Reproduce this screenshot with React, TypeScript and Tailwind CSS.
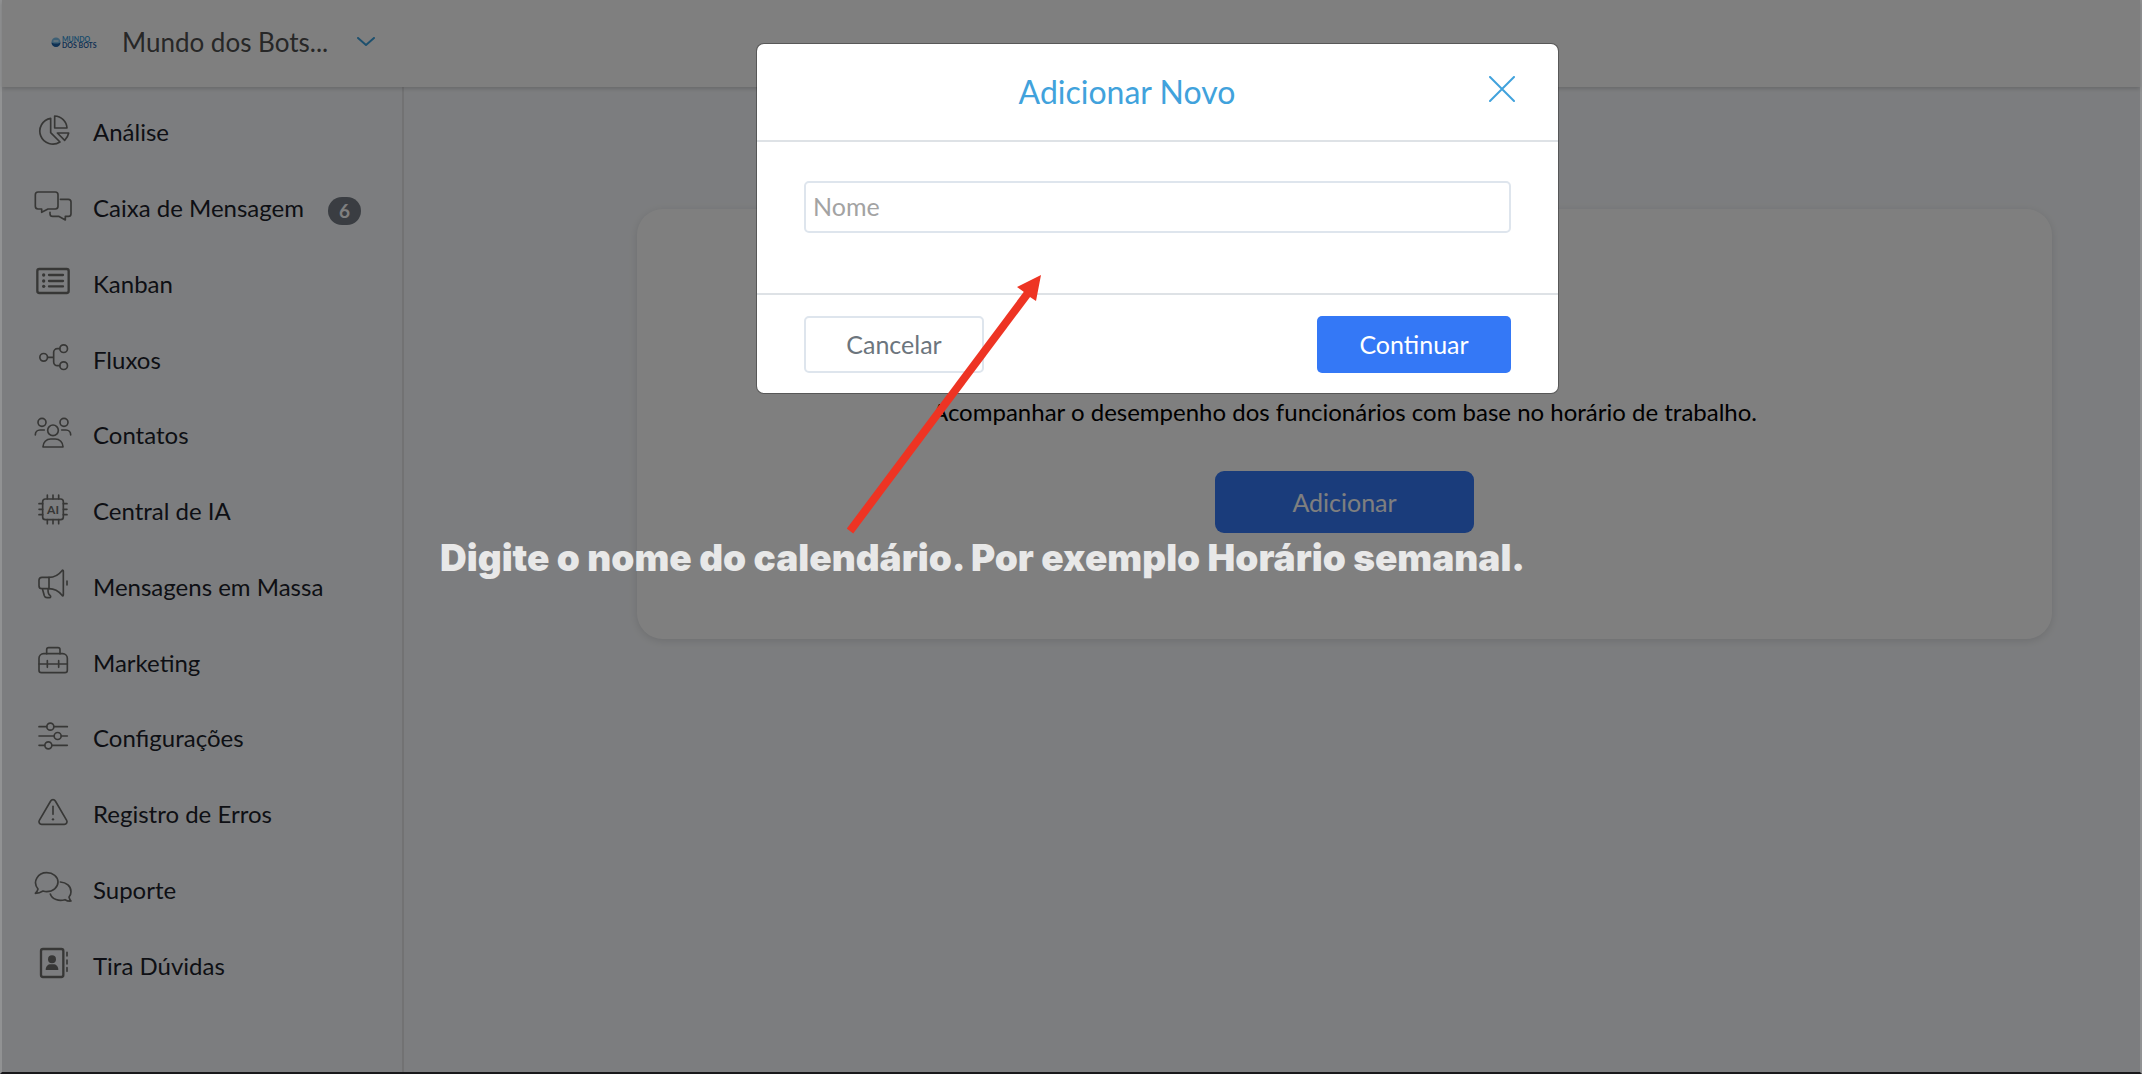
import type { ReactNode } from "react";

function Icon({ children }: { children: ReactNode }) {
  return (
    <svg
      viewBox="0 0 114 96"
      className="h-8 w-[38px] shrink-0"
      fill="none"
      stroke="currentColor"
      strokeWidth="5"
      strokeLinecap="round"
      strokeLinejoin="round"
      aria-hidden="true"
    >
      {children}
    </svg>
  );
}

const items: { label: string; badge?: string; icon: ReactNode }[] = [
  {
    label: "Análise",
    icon: (
      <>
        <path d="M50 13v43l28 28A39 39 0 1 1 50 13z" />
        <path d="M62 6v36h37A38 38 0 0 0 62 6z" />
        <path d="M70 57h34a40 40 0 0 1-12 22z" />
      </>
    ),
  },
  {
    label: "Caixa de Mensagem",
    badge: "6",
    icon: (
      <>
        <path d="M12 6h52a8 8 0 0 1 8 8v35a8 8 0 0 1-8 8H42L23 67V57H12a8 8 0 0 1-8-8V14a8 8 0 0 1 8-8z" />
        <path d="M79 28h24a8 8 0 0 1 8 8v35a8 8 0 0 1-8 8H94v11L74 79H56a8 8 0 0 1-8-8v-4" />
      </>
    ),
  },
  {
    label: "Kanban",
    icon: (
      <>
        <rect x="10" y="12" width="94" height="72" rx="6" strokeWidth="7" />
        <path d="M45 30h42M45 48h42M45 64h42" strokeWidth="7" />
        <g fill="currentColor" stroke="none">
          <circle cx="29" cy="30" r="5" />
          <circle cx="29" cy="48" r="5" />
          <circle cx="29" cy="64" r="5" />
        </g>
      </>
    ),
  },
  {
    label: "Fluxos",
    icon: (
      <>
        <circle cx="29" cy="49" r="11.5" />
        <circle cx="89" cy="23" r="11.5" />
        <circle cx="89" cy="74" r="11.5" />
        <path d="M41 49h18M77 23h-7a11 11 0 0 0-11 11v29a11 11 0 0 0 11 11h7" />
      </>
    ),
  },
  {
    label: "Contatos",
    icon: (
      <>
        <circle cx="24" cy="16" r="12" />
        <circle cx="90" cy="16" r="12" />
        <circle cx="57" cy="40" r="16" />
        <path d="M4 54v-1a14 14 0 0 1 14-14h13M110 54v-1a14 14 0 0 0-14-14H83" />
        <path d="M27 90v-1a23 23 0 0 1 23-23h14a23 23 0 0 1 23 23v1z" />
      </>
    ),
  },
  {
    label: "Central de IA",
    icon: (
      <>
        <rect x="26" y="18" width="62" height="62" rx="8" />
        <path d="M40 6v12M57 6v12M74 6v12M40 80v12M57 80v12M74 80v12M15 32h11M15 49h11M15 65h11M88 32h11M88 49h11M88 65h11" />
        <text
          x="57"
          y="62"
          textAnchor="middle"
          fontSize="36"
          fontWeight="700"
          fontFamily="Lato, sans-serif"
          fill="currentColor"
          stroke="none"
        >
          AI
        </text>
      </>
    ),
  },
  {
    label: "Mensagens em Massa",
    icon: (
      <>
        <path d="M45 28H24a9 9 0 0 0-9 9v16a9 9 0 0 0 9 9h21z" />
        <path d="M45 28C62 28 76 18 84 8c2-2 4-2 4 1v72c0 3-2 4-4 1C76 72 62 62 45 62" />
        <path d="M26 65l5 18a9 9 0 0 0 9 6h6c5 0 5-5 2-7c-5-3-6-6-6-17M99 39v12" />
      </>
    ),
  },
  {
    label: "Marketing",
    icon: (
      <>
        <path d="M29 29h57a14 14 0 0 1 14 14v36a7 7 0 0 1-7 7H22a7 7 0 0 1-7-7V43a14 14 0 0 1 14-14z" />
        <path d="M38 29V17a6 6 0 0 1 6-6h28a6 6 0 0 1 6 6v12M15 60h85M40 50v20M74 50v20" />
      </>
    ),
  },
  {
    label: "Configurações",
    icon: (
      <>
        <path d="M15 20h23M60 20h40M15 48h45M82 48h18M15 76h17M54 76h46" />
        <circle cx="49" cy="20" r="10.5" />
        <circle cx="71" cy="48" r="10.5" />
        <circle cx="43" cy="76" r="10.5" />
      </>
    ),
  },
  {
    label: "Registro de Erros",
    icon: (
      <>
        <path d="M50 15a8 8 0 0 1 14 0l34 58a8 8 0 0 1-7 12H23a8 8 0 0 1-7-12z" />
        <path d="M57 31v24" />
        <circle cx="57" cy="70" r="3.5" fill="currentColor" stroke="none" />
      </>
    ),
  },
  {
    label: "Suporte",
    icon: (
      <>
        <path d="M12 54C-6 32 12 5 38 5c19 0 34 12 34 28S57 62 38 62c-4 0-8-1-11-2-6 4-14 7-23 7 4-4 7-8 8-13z" />
        <path d="M79 33c18 1 32 13 32 29 0 6-2 12-6 16 1 5 3 9 6 12-7 1-13-1-18-4-18 6-39-1-44-17" />
      </>
    ),
  },
  {
    label: "Tira Dúvidas",
    icon: (
      <>
        <rect x="21" y="6" width="67" height="84" rx="6" strokeWidth="7" />
        <g fill="currentColor" stroke="none">
          <circle cx="54" cy="37" r="12" />
          <path d="M35 69c0-11 7-17 15-17h8c8 0 15 6 15 17z" />
        </g>
        <path d="M99 16v11M99 39v12M99 62v11" />
      </>
    ),
  },
];

function Logo() {
  return (
    <span className="flex w-[42px] items-center gap-px" aria-label="Mundo dos Bots">
      <svg viewBox="0 0 20 24" className="h-3 w-2.5 shrink-0" aria-hidden="true">
        <circle cx="10" cy="12" r="9" fill="#7cc0ea" />
        <path d="M1 13a9 9 0 0 0 18 0l-5 2H6z" fill="#1f62a8" />
        <path d="M5 10h10" stroke="#fff" strokeWidth="2" />
      </svg>
      <span className="flex flex-col whitespace-nowrap text-[7px] leading-[6px] font-bold">
        <span className="text-[#3a9bd9]">MUNDO</span>
        <span className="text-[#1f62a8]">DOS BOTS</span>
      </span>
    </span>
  );
}

export default function App() {
  return (
    <div className="relative flex min-h-screen flex-col border-x-2 border-b-2 border-x-[#919293] border-b-[#18181a] bg-[#f9fbfe] font-[Lato,sans-serif] text-[25px] leading-8 text-[#1c1f2b]">
      <header className="z-10 flex h-[87px] items-center bg-white pb-1 pl-[49px] shadow-[0_2px_4px_rgba(0,0,0,0.16)]">
        <Logo />
        <button type="button" className="ml-[29px] flex items-center gap-[29px] text-[26px] text-[#4f4f4f]">
          Mundo dos Bots...
          <svg viewBox="0 0 18 10" className="h-2.5 w-[18px]" fill="none" stroke="#3ba0dc" strokeWidth="2" aria-hidden="true">
            <path d="M1 1l8 7 8-7" strokeLinecap="round" strokeLinejoin="round" />
          </svg>
        </button>
      </header>

      <div className="flex flex-1">
        <nav className="flex w-[402px] flex-col border-r-2 border-[#e4e5e7] pt-2 pb-[68px] text-[24px]">
          {items.map((item) => (
            <a key={item.label} href="#" className="flex flex-1 items-center pl-8">
              <span className="mb-1.5 text-[#6f6f6d]">
                <Icon>{item.icon}</Icon>
              </span>
              <span className="mb-px ml-[21px]">{item.label}</span>
              {item.badge && (
                <span className="mt-1 ml-6 flex h-7 w-[33px] items-center justify-center rounded-full bg-[#747b85] text-[19px] font-bold text-white">
                  {item.badge}
                </span>
              )}
            </a>
          ))}
        </nav>

        <main className="flex-1 pt-[122px] pr-[88px] pl-[233px]">
          <section className="flex h-[430px] flex-col items-center rounded-[26px] bg-white pt-[187px] shadow-[0_2px_8px_rgba(0,0,0,0.12)]">
            <p className="text-[24px] text-black">
              Acompanhar o desempenho dos funcionários com base no horário de trabalho.
            </p>
            <button type="button" className="mt-[43px] h-[62px] w-[259px] rounded-[9px] bg-[#3478f6] text-white">
              Adicionar
            </button>
          </section>
        </main>
      </div>

      <div className="absolute inset-0 z-20 flex items-start justify-center bg-black/50 pt-11 pl-[173px]">
        <div
          role="dialog"
          aria-label="Adicionar Novo"
          className="w-[801px] rounded-[7px] bg-white shadow-[0_0_0_1px_rgba(0,0,0,0.3)]"
        >
          <div className="flex h-[98px] items-center border-b-2 border-[#dee2e6] pr-[43px] pl-[47px]">
            <h2 className="flex-1 pr-[39px] text-center text-[32px] leading-10 text-[#41a2dc]">Adicionar Novo</h2>
            <button type="button" aria-label="Fechar" className="mb-1.5">
              <svg viewBox="0 0 26 26" className="size-[26px]" fill="none" stroke="#41a2dc" strokeWidth="2" strokeLinecap="round">
                <path d="M1 1l24 24M25 1L1 25" />
              </svg>
            </button>
          </div>
          <div className="px-[47px] pt-[39px] pb-[60px]">
            <input
              type="text"
              aria-label="Nome"
              placeholder="Nome"
              className="block h-[52px] w-full rounded-[5px] border-2 border-[#dee5ed] px-[7px] pb-0.5 placeholder:text-[#a3a3a3]"
            />
          </div>
          <div className="flex justify-between border-t-2 border-[#dee2e6] px-[47px] pt-[21px] pb-5">
            <button type="button" className="h-[57px] w-[180px] rounded-[5px] border-2 border-[#dee5ed] pb-0.5 text-[#6c757d]">
              Cancelar
            </button>
            <button type="button" className="h-[57px] w-[194px] rounded-[5px] bg-[#3478f6] pb-0.5 text-white">
              Continuar
            </button>
          </div>
        </div>
      </div>

      <svg viewBox="0 0 194 260" className="absolute top-[275px] left-[845px] z-30 h-[260px] w-[194px]" aria-hidden="true">
        <path d="M3 256L181 18" stroke="#ee3423" strokeWidth="8" />
        <path d="M194 0l-24 12 7 5 6 5 6 4z" fill="#ee3423" />
      </svg>
      <p className="absolute top-[537px] left-[438px] z-30 whitespace-nowrap font-[Inter,sans-serif] text-[37px] leading-[42px] font-black text-[#e8e8e8]">
        Digite o nome do calendário. Por exemplo Horário semanal.
      </p>
    </div>
  );
}
